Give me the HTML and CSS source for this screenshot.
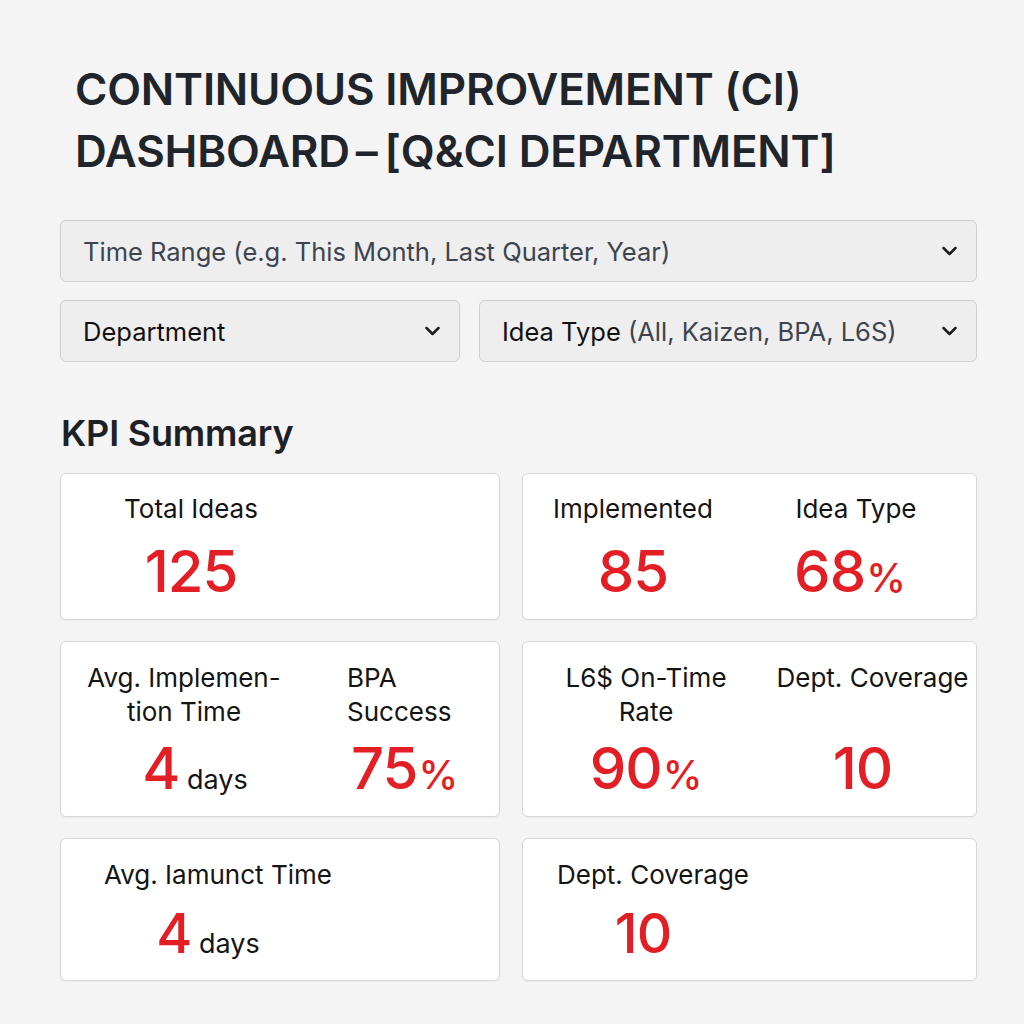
FILE: index.html
```html
<!DOCTYPE html>
<html lang="en">
<head>
<meta charset="utf-8">
<title>CI Dashboard</title>
<link rel="stylesheet" href="styles.css">
</head>
<body>
<div class="page">
  <h1 class="title">CONTINUOUS IMPROVEMENT (CI)<br>DASHBOARD<span class="dash">–</span>[Q&amp;CI DEPARTMENT]</h1>

  <div class="filters">
    <div class="select">
      <span class="select__text muted">Time Range (e.g. This Month, Last Quarter, Year)</span>
      <svg class="chevron" viewBox="0 0 15 10" width="15" height="10"><polyline points="1.5,2 7.5,8 13.5,2"/></svg>
    </div>
    <div class="filter-row">
      <div class="select">
        <span class="select__text">Department</span>
        <svg class="chevron" viewBox="0 0 15 10" width="15" height="10"><polyline points="1.5,2 7.5,8 13.5,2"/></svg>
      </div>
      <div class="select">
        <span class="select__text">Idea Type <span class="muted">(All, Kaizen, BPA, L6S)</span></span>
        <svg class="chevron" viewBox="0 0 15 10" width="15" height="10"><polyline points="1.5,2 7.5,8 13.5,2"/></svg>
      </div>
    </div>
  </div>

  <h2 class="section-title">KPI Summary</h2>

  <div class="kpi-grid">
    <div class="card card--a">
      <div class="kpi">
        <div class="kpi__label">Total Ideas</div>
        <div class="kpi__value">125</div>
      </div>
    </div>
    <div class="card card--b">
      <div class="kpi">
        <div class="kpi__label">Implemented</div>
        <div class="kpi__value">85</div>
      </div>
      <div class="kpi">
        <div class="kpi__label kpi__label--nudge">Idea Type</div>
        <div class="kpi__value">68<span class="pct">%</span></div>
      </div>
    </div>

    <div class="card card--tall card--c">
      <div class="kpi">
        <div class="kpi__label">Avg. Implemen-<br>tion Time</div>
        <div class="kpi__value kpi__value--right">4<span class="unit"> days</span></div>
      </div>
      <div class="kpi kpi--left">
        <div class="kpi__label">BPA<br>Success</div>
        <div class="kpi__value kpi__value--indent">75<span class="pct">%</span></div>
      </div>
    </div>
    <div class="card card--tall card--d">
      <div class="kpi">
        <div class="kpi__label">L6$ On-Time<br>Rate</div>
        <div class="kpi__value">90<span class="pct">%</span></div>
      </div>
      <div class="kpi">
        <div class="kpi__label">Dept. Coverage</div>
        <div class="kpi__value kpi__value--left">10</div>
      </div>
    </div>

    <div class="card card--short card--e">
      <div class="kpi">
        <div class="kpi__label">Avg. Iamunct Time</div>
        <div class="kpi__value kpi__value--sm kpi__value--left">4<span class="unit"> days</span></div>
      </div>
    </div>
    <div class="card card--short card--f">
      <div class="kpi">
        <div class="kpi__label">Dept. Coverage</div>
        <div class="kpi__value kpi__value--sm kpi__value--left">10</div>
      </div>
    </div>
  </div>
</div>
</body>
</html>
```

FILE: styles.css
```css
* { box-sizing: border-box; }

body {
  margin: 0;
  background: #f4f4f4;
  font-family: Inter, "Noto Sans", "Liberation Sans", sans-serif;
  color: #141414;
}

.page {
  padding: 58px 47px 40px 60px;
}

.title {
  margin: 0 0 38px 15px;
  font-size: 44px;
  line-height: 62px;
  font-weight: 600;
  letter-spacing: -0.2px;
  color: #1f252b;
}

.dash {
  margin: 0 7px 0 6px;
}

.filters {
  display: flex;
  flex-direction: column;
  gap: 18px;
}

.filter-row {
  display: grid;
  grid-template-columns: 400px 1fr;
  gap: 19px;
}

.select {
  height: 62px;
  border: 1px solid #cfcfcf;
  border-radius: 6px;
  background: #eeeeee;
  display: flex;
  align-items: center;
  justify-content: space-between;
  padding: 0 19px 0 22px;
  font-size: 25.5px;
  color: #111;
}

.muted { color: #3d4450; }

.chevron {
  flex: none;
  fill: none;
  stroke: #1e1e1e;
  stroke-width: 2.5;
  stroke-linecap: round;
  stroke-linejoin: round;
}

.section-title {
  margin: 49px 0 18px 1px;
  font-size: 36px;
  line-height: 44px;
  font-weight: 600;
  letter-spacing: -0.2px;
  color: #1c2127;
}

.kpi-grid {
  display: grid;
  grid-template-columns: 440px 1fr;
  column-gap: 22px;
  row-gap: 21px;
}

.card {
  background: #fff;
  border: 1px solid #d6d6d6;
  border-radius: 6px;
  box-shadow: 0 1px 2px rgba(0, 0, 0, 0.04);
  display: grid;
  padding: 18px 0 19px;
}

.card--a { grid-template-columns: 260px; }
.card--b { grid-template-columns: 220px 214px; }
.card--c { grid-template-columns: 246px 188px; }
.card--d { grid-template-columns: 246px 1fr; }
.card--e { grid-template-columns: 314px; }
.card--f { grid-template-columns: 260px; }

.card--tall { padding: 19px 0 19px; }
.card--short { padding: 19px 0 19px; }

.kpi {
  display: flex;
  flex-direction: column;
  justify-content: space-between;
  text-align: center;
  gap: 16px;
}

.card--tall .kpi { gap: 10px; }
.card--short .kpi { gap: 14px; }

.kpi--left {
  text-align: left;
  padding-left: 40px;
}

.kpi__label {
  font-size: 26px;
  line-height: 34px;
  color: #141414;
}

.kpi__label--nudge { padding-left: 12px; }

.kpi__value {
  font-size: 58px;
  line-height: 58px;
  font-weight: 500;
  color: #e31e24;
  letter-spacing: -1px;
  white-space: nowrap;
}

.kpi__value--sm {
  font-size: 55px;
  line-height: 55px;
}

.kpi__value--right { padding-left: 22px; }
.kpi__value--left { padding-right: 20px; }
.kpi__value--indent { padding-left: 4px; }

.pct {
  font-size: 40px;
  line-height: 1;
  margin-left: 1px;
  letter-spacing: 0;
}

.unit {
  font-size: 27px;
  line-height: 1;
  font-weight: 400;
  color: #141414;
  letter-spacing: 0;
}
```
